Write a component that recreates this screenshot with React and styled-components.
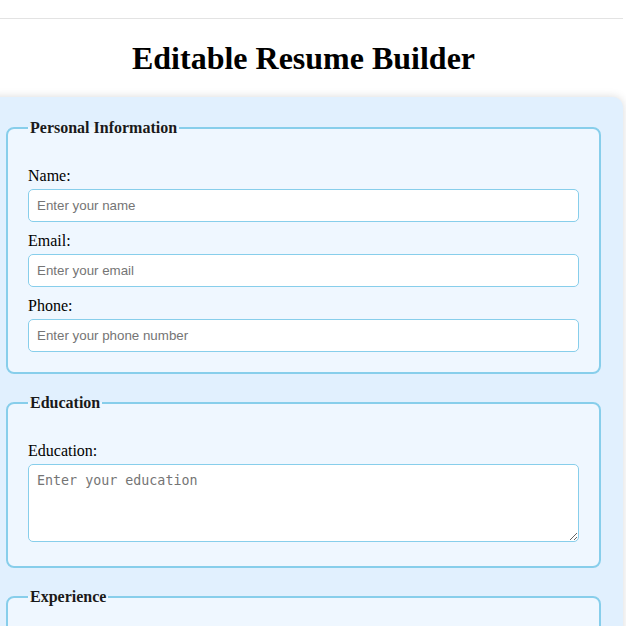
import React, { useState } from 'react';
import styled, { createGlobalStyle } from 'styled-components';

const GlobalStyle = createGlobalStyle`
  html {
    overflow: hidden;
  }
  body {
    margin: 0;
    background: #fff;
    font-family: "Liberation Serif", "Times New Roman", serif;
    color: #000;
  }
`;

const Page = styled.div`
  width: 639px;
  margin-left: -16px;
`;

const TopBar = styled.div`
  height: 18px;
  border-bottom: 1px solid #e3e3e3;
  margin-left: 16px;
`;

const Title = styled.h1`
  font-size: 32px;
  font-weight: bold;
  text-align: center;
  margin: 21px 0 20px;
`;

const Container = styled.div`
  background: #e1f0fe;
  border-radius: 10px;
  box-shadow: 0 0 10px rgba(0, 0, 0, 0.15);
  padding: 22px 20px 20px;
`;

const Section = styled.fieldset`
  border: 2px solid #87ceeb;
  border-radius: 8px;
  background: #eff7ff;
  padding: 20px;
  margin: 0 2px 20px;
`;

const Legend = styled.legend`
  font-weight: bold;
  font-size: 16px;
  color: #1a1a1a;
  padding: 0 2px;
`;

const Label = styled.label`
  display: block;
  font-size: 16px;
  margin: 10px 0 4px;
`;

const Input = styled.input`
  box-sizing: border-box;
  width: 100%;
  height: 33px;
  padding: 8px;
  border: 1px solid #87ceeb;
  border-radius: 5px;
  font-family: "Liberation Sans", Arial, sans-serif;
  font-size: 13.333px;
  background: #fff;
  outline: none;

  &::placeholder {
    color: #757575;
  }
`;

const TextArea = styled.textarea`
  box-sizing: border-box;
  width: 100%;
  height: 78px;
  padding: 8px;
  border: 1px solid #87ceeb;
  border-radius: 5px;
  font-family: "DejaVu Sans Mono", "Liberation Mono", monospace;
  font-size: 13.333px;
  background: #fff;
  outline: none;

  &::placeholder {
    color: #757575;
  }
`;

const Field = ({ label, id, value, onChange, placeholder, multiline }) => (
  <>
    <Label htmlFor={id}>{label}</Label>
    {multiline ? (
      <TextArea id={id} value={value} onChange={onChange} placeholder={placeholder} />
    ) : (
      <Input id={id} value={value} onChange={onChange} placeholder={placeholder} />
    )}
  </>
);

const App = () => {
  const [form, setForm] = useState({
    name: '',
    email: '',
    phone: '',
    education: '',
    experience: '',
  });

  const update = key => e => setForm({ ...form, [key]: e.target.value });

  return (
    <>
      <GlobalStyle />
      <Page>
        <TopBar />
        <Title>Editable Resume Builder</Title>
        <Container>
          <Section>
            <Legend>Personal Information</Legend>
            <Field label="Name:" id="name" value={form.name} onChange={update('name')} placeholder="Enter your name" />
            <Field label="Email:" id="email" value={form.email} onChange={update('email')} placeholder="Enter your email" />
            <Field label="Phone:" id="phone" value={form.phone} onChange={update('phone')} placeholder="Enter your phone number" />
          </Section>
          <Section>
            <Legend>Education</Legend>
            <Field label="Education:" id="education" value={form.education} onChange={update('education')} placeholder="Enter your education" multiline />
          </Section>
          <Section>
            <Legend>Experience</Legend>
            <Field label="Experience:" id="experience" value={form.experience} onChange={update('experience')} placeholder="Enter your experience" multiline />
          </Section>
        </Container>
      </Page>
    </>
  );
};

export default App;
